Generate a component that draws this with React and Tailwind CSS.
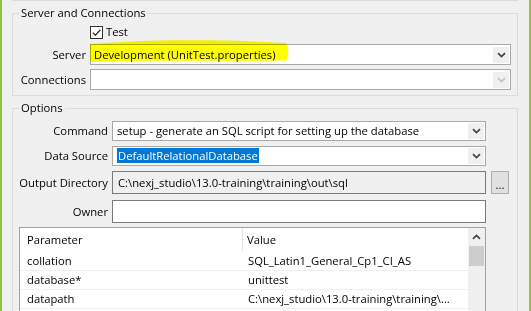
import React from 'react'

const Chevron = ({ up = false, muted = false }) => (
  <svg width="9" height="6" viewBox="0 0 9 6" className={up ? 'rotate-180' : ''}>
    <path d="M1 1.2l3.5 3.3 3.5-3.3" fill="none" stroke={muted ? '#c4c4c4' : '#404040'} strokeWidth="1.7" />
  </svg>
)

const Combo = ({ children, disabled = false, className = '' }) => (
  <div className={`h-[21px] border border-[#a9a9a9] bg-white flex items-center ${className}`}>
    <div className="flex-1 min-w-0 pl-[3px] whitespace-nowrap overflow-hidden">{children}</div>
    <div className="w-[16px] h-[16px] mr-[1px] bg-[#f0f0f0] flex items-center justify-center">
      <Chevron muted={disabled} />
    </div>
  </div>
)

const rows = [
  ['collation', 'SQL_Latin1_General_Cp1_CI_AS'],
  ['database*', 'unittest'],
  ['datapath', 'C:\\nexj_studio\\13.0-training\\training\\...'],
]

export default function App() {
  return (
    <div className="w-[531px] h-[311px] overflow-hidden bg-[#f0f0f0] flex font-['Open_Sans',sans-serif] text-[11.25px] leading-[16px] text-black">
      <div className="w-[2px] shrink-0 bg-[#8cc63f]" />
      <div className="flex-1 flex flex-col pl-[10px] pr-[11px]">
        <div className="h-[2px] border-x border-b border-[#dcdcdc]" />

        {/* Server and Connections */}
        <fieldset className="mt-[4px] border border-[#dcdcdc] pr-[6px] pb-[5px]">
          <legend className="ml-[6px] px-[2px]">Server and Connections</legend>
          <div className="grid grid-cols-[73px_1fr] gap-x-[4px]">
            <div />
            <div className="mt-[3px] h-[16px] flex items-center gap-[3px]">
              <div className="w-[13px] h-[13px] border border-[#333] bg-white flex items-center justify-center">
                <svg width="11" height="11" viewBox="0 0 11 11">
                  <path d="M1.8 5.6l2.6 2.6 5-5.4" fill="none" stroke="#333" strokeWidth="1.3" />
                </svg>
              </div>
              <span>Test</span>
            </div>

            <div className="mt-[4px] h-[21px] flex items-center justify-end">Server</div>
            <div className="mt-[4px] relative">
              <Combo>Development (UnitTest.properties)</Combo>
              <svg className="absolute left-0 top-[-4px] mix-blend-multiply pointer-events-none" width="200" height="25" viewBox="0 0 200 25">
                <path d="M0 4 C20 3 40 1 70 0.5 C110 0 160 0.5 196 3 C199 5 199 18 196 20.5 C150 21 90 20.5 40 21 C20 21.5 5 22 0 21.5 Z" fill="#ffff00" />
              </svg>
            </div>

            <div className="mt-[4px] h-[21px] flex items-center justify-end">Connections</div>
            <div className="mt-[4px]">
              <Combo disabled />
            </div>
          </div>
        </fieldset>

        {/* Options */}
        <fieldset className="mt-[4px] border border-[#dcdcdc] pr-[7px]">
          <legend className="ml-[6px] px-[2px]">Options</legend>
          <div className="grid grid-cols-[95px_374px_19px] gap-x-[4px]">
            <div className="mt-[5px] h-[20px] flex items-center justify-end">Command</div>
            <div className="mt-[5px]">
              <Combo className="!h-[20px] pl-[1px]">setup - generate an SQL script for setting up the database</Combo>
            </div>
            <div />

            <div className="mt-[5px] h-[20px] flex items-center justify-end">Data Source</div>
            <div className="mt-[5px]">
              <Combo className="!h-[20px] pl-[1px]">
                <span className="bg-[#0078d7] text-white px-[1px] py-[0px]">DefaultRelationalDatabase</span>
              </Combo>
            </div>
            <div />

            <div className="mt-[5px] h-[23px] flex items-center justify-end">Output Directory</div>
            <div className="mt-[5px] h-[23px] border border-[#7a7a7a] bg-[#f0f0f0] flex items-center pl-[5px] whitespace-nowrap">
              C:\nexj_studio\13.0-training\training\out\sql
            </div>
            <div className="mt-[5px] ml-[1px] h-[23px] border border-[#adadad] bg-[#e1e1e1] flex items-end justify-center pb-[3px] leading-[10px]">
              ...
            </div>

            <div className="mt-[6px] h-[23px] flex items-center justify-end">Owner</div>
            <div className="mt-[6px] h-[23px] border border-[#7a7a7a] bg-white" />
            <div />
          </div>

          {/* Parameter table */}
          <div className="mt-[4px] ml-[6px] w-[467px] h-[120px] border border-[#a0a0a0] bg-white flex">
            <div className="flex-1 min-w-0">
              <div className="h-[24px] flex">
                <div className="w-[223px] pl-[7px] border-r border-[#e5e5e5] flex items-center">Parameter</div>
                <div className="flex-1 pl-[4px] flex items-center">Value</div>
              </div>
              {rows.map(([name, value]) => (
                <div key={name} className="h-[19px] flex border-b border-[#f0f0f0]">
                  <div className="w-[224px] pl-[7px] flex items-center">{name}</div>
                  <div className="flex-1 min-w-0 pl-[4px] flex items-center whitespace-nowrap overflow-hidden">{value}</div>
                </div>
              ))}
            </div>
            <div className="w-[17px] bg-[#f0f0f0] flex flex-col items-center">
              <div className="h-[18px] flex items-center justify-center">
                <Chevron up />
              </div>
              <div className="w-[15px] h-[20px] bg-[#cdcdcd]" />
            </div>
          </div>
        </fieldset>
      </div>
      <div className="w-[2px] shrink-0 bg-[#8cc63f]" />
    </div>
  )
}
